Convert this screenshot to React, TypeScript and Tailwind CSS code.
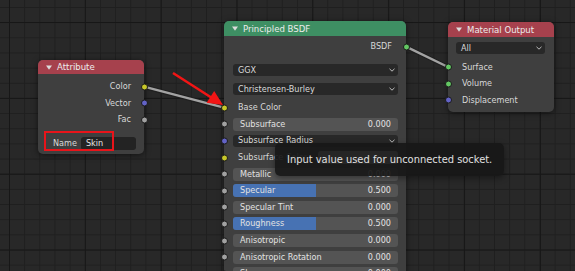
import React from 'react';

type SockColor = 'yellow' | 'purple' | 'gray' | 'green';

const sockClass: Record<SockColor, string> = {
  yellow: 'bg-[#c7c729]',
  purple: 'bg-[#6363c7]',
  gray: 'bg-[#a1a1a1]',
  green: 'bg-[#63c763]',
};

const Socket: React.FC<{ color: SockColor; side: 'left' | 'right' }> = ({ color, side }) => (
  <div
    className={`absolute top-1/2 -translate-y-1/2 w-[7px] h-[7px] rounded-full border border-[#1a1a1a] ${sockClass[color]} ${
      side === 'left' ? 'left-[-3.5px]' : 'right-[-3.5px]'
    }`}
  />
);

const Tri = () => (
  <svg width="6" height="5" viewBox="0 0 6 5" className="shrink-0">
    <polygon points="0,0.5 6,0.5 3,4.8" fill="#dcdcdc" />
  </svg>
);

const Chevron = () => (
  <svg width="6" height="4" viewBox="0 0 6 4" className="shrink-0">
    <polyline points="0.5,0.8 3,3.2 5.5,0.8" fill="none" stroke="#bdbdbd" strokeWidth="1" />
  </svg>
);

interface NodeProps {
  title: string;
  header: string;
  className: string;
  headerH: string;
  children: React.ReactNode;
}

const Node: React.FC<NodeProps> = ({ title, header, className, headerH, children }) => (
  <div className={`absolute rounded-[5px] bg-[#3f3f3f] shadow-[0_1px_6px_rgba(0,0,0,0.55)] ${className}`}>
    <div className={`${headerH} ${header} rounded-t-[5px] flex items-center pl-[8px] gap-[5px] text-[9.5px] text-[#ececec]`}>
      <Tri />
      <span>{title}</span>
    </div>
    {children}
  </div>
);

const Dropdown: React.FC<{ label: string }> = ({ label }) => (
  <div className="h-[12px] w-full rounded-[3px] bg-[#282828] flex items-center justify-between pl-[5px] pr-[3px] text-[#dadada]">
    <span>{label}</span>
    <Chevron />
  </div>
);

const Slider: React.FC<{ label: string; value: string; fill?: boolean }> = ({ label, value, fill }) => (
  <div className="relative h-[13px] w-full rounded-[3px] bg-[#545454] overflow-hidden flex items-center justify-between px-[7px] text-[#e2e2e2]">
    {fill && <div className="absolute inset-y-0 left-0 w-1/2 bg-[#4772b3]" />}
    <span className="relative">{label}</span>
    <span className="relative">{value}</span>
  </div>
);

const InRow: React.FC<{ sock: SockColor; children: React.ReactNode }> = ({ sock, children }) => (
  <div className="relative h-[16.6px] flex items-center pl-[9px] pr-[8px]">
    <Socket color={sock} side="left" />
    {children}
  </div>
);

const inputs: { label: string; value: string; fill?: boolean }[] = [
  { label: 'Metallic', value: '0.000' },
  { label: 'Specular', value: '0.500', fill: true },
  { label: 'Specular Tint', value: '0.000' },
  { label: 'Roughness', value: '0.500', fill: true },
  { label: 'Anisotropic', value: '0.000' },
  { label: 'Anisotropic Rotation', value: '0.000' },
  { label: 'Sheen', value: '0.000' },
];

export default function App() {
  return (
    <div
      className="relative w-[575px] h-[271px] overflow-hidden bg-[#282828] bg-[linear-gradient(to_right,#171717_1px,transparent_1px),linear-gradient(to_bottom,#171717_1px,transparent_1px),linear-gradient(to_right,#1f1f1f_1px,transparent_1px),linear-gradient(to_bottom,#1f1f1f_1px,transparent_1px)] bg-[size:75.85px_75.85px,75.85px_75.85px,15.17px_15.17px,15.17px_15.17px] bg-[position:9px_22px,9px_22px,9px_7px,9px_7px] font-['DejaVu_Sans_Condensed','DejaVu_Sans',sans-serif] text-[9px] leading-none"
    >
      {/* links */}
      <svg className="absolute inset-0 pointer-events-none" width="575" height="271">
        <g strokeLinecap="round">
          <line x1="144" y1="86.7" x2="224" y2="107.7" stroke="#1c1c1c" strokeOpacity="0.7" strokeWidth="4.5" />
          <line x1="144" y1="86.7" x2="224" y2="107.7" stroke="#a3a3a3" strokeWidth="2.4" />
          <line x1="406" y1="46.7" x2="448" y2="67" stroke="#1c1c1c" strokeOpacity="0.7" strokeWidth="4.5" />
          <line x1="406" y1="46.7" x2="448" y2="67" stroke="#a3a3a3" strokeWidth="2.4" />
        </g>
      </svg>

      {/* Attribute */}
      <Node title="Attribute" header="bg-[#a6414d]" headerH="h-[14px]" className="left-[38px] top-[60px] w-[106px] h-[94px]">
        <div className="pt-[4.5px] text-[#d8d8d8]">
          {[
            { l: 'Color', c: 'yellow' as SockColor },
            { l: 'Vector', c: 'purple' as SockColor },
            { l: 'Fac', c: 'gray' as SockColor },
          ].map((o) => (
            <div key={o.l} className="relative h-[16.5px] flex items-center justify-end pr-[13px]">
              <span>{o.l}</span>
              <Socket color={o.c} side="right" />
            </div>
          ))}
          <div className="relative mt-[9px] h-[13px] flex items-center pl-[15px] pr-[8px] gap-[4px]">
            <span>Name</span>
            <div className="h-[13px] flex-1 rounded-[3px] bg-[#232323] flex items-center pl-[5px] text-[#e6e6e6]">Skin</div>
            <div className="absolute left-[6px] top-[-6px] w-[70px] h-[20px] border-2 border-[#e8141a]" />
          </div>
        </div>
      </Node>

      {/* Principled BSDF */}
      <Node title="Principled BSDF" header="bg-[#3e8f63]" headerH="h-[15px]" className="left-[224px] top-[21px] w-[182px] h-[270px]">
        <div className="pt-[2.5px] text-[#d8d8d8]">
          <div className="relative h-[16.5px] flex items-center justify-end pr-[14px]">
            <span>BSDF</span>
            <Socket color="green" side="right" />
          </div>
          <div className="mt-[5.5px] pl-[9px] pr-[8px]">
            <div className="h-[19px] flex items-center">
              <Dropdown label="GGX" />
            </div>
            <div className="h-[19px] flex items-center">
              <Dropdown label="Christensen-Burley" />
            </div>
          </div>
          <div className="mt-[1px]">
            <InRow sock="yellow">
              <span className="pl-[5px]">Base Color</span>
            </InRow>
            <InRow sock="gray">
              <Slider label="Subsurface" value="0.000" />
            </InRow>
            <InRow sock="purple">
              <Dropdown label="Subsurface Radius" />
            </InRow>
            <InRow sock="yellow">
              <div className="w-full flex items-center justify-between">
                <span className="pl-[5px]">Subsurface Color</span>
                <div className="h-[13px] w-[80px] rounded-[3px] bg-[#cccccc]" />
              </div>
            </InRow>
            {inputs.map((i) => (
              <InRow key={i.label} sock="gray">
                <Slider label={i.label} value={i.value} fill={i.fill} />
              </InRow>
            ))}
          </div>
        </div>
      </Node>

      {/* Material Output */}
      <Node title="Material Output" header="bg-[#a6414d]" headerH="h-[15px]" className="left-[448px] top-[22px] w-[106px] h-[90px]">
        <div className="text-[#d8d8d8]">
          <div className="h-[22px] flex items-center pl-[8px] pr-[9px]">
            <Dropdown label="All" />
          </div>
          {[
            { l: 'Surface', c: 'green' as SockColor },
            { l: 'Volume', c: 'green' as SockColor },
            { l: 'Displacement', c: 'purple' as SockColor },
          ].map((o) => (
            <div key={o.l} className="relative h-[16.6px] flex items-center pl-[14px]">
              <Socket color={o.c} side="left" />
              <span>{o.l}</span>
            </div>
          ))}
        </div>
      </Node>

      {/* tooltip */}
      <div className="absolute left-[275px] top-[143px] w-[229px] h-[33px] rounded-[5px] bg-[rgba(24,24,24,0.93)] shadow-[0_2px_6px_rgba(0,0,0,0.4)] flex items-center pl-[12px] text-[11px] text-[#e0e0e0]">
        Input value used for unconnected socket.
      </div>

      {/* annotation arrow */}
      <svg className="absolute inset-0 pointer-events-none" width="575" height="271">
        <line x1="173" y1="73" x2="212" y2="98" stroke="#f21515" strokeWidth="2.5" />
        <polygon points="223,105 206.6,102.8 214.2,91" fill="#f21515" />
      </svg>
    </div>
  );
}
